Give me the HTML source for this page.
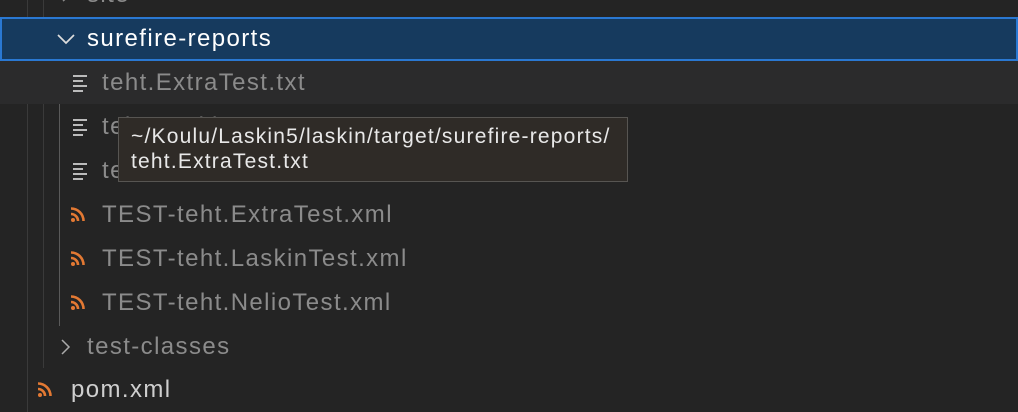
<!DOCTYPE html>
<html><head><style>
body{margin:0;width:1018px;height:412px;background:#242424;overflow:hidden;position:relative;font-family:"Liberation Sans",sans-serif;font-size:24px;letter-spacing:1.4px;}
.row{position:absolute;left:0;width:1018px;height:44px;line-height:44px;color:#8b8b8b;}
.g{position:absolute;width:1px;background:#3a3a3a;}
.t{position:absolute;top:0;white-space:nowrap;}
.tip{position:absolute;left:118px;top:117px;width:510px;height:65px;background:#2f2b27;border:1px solid #575552;color:#e8e8e8;font-size:21px;letter-spacing:1.2px;line-height:25px;padding:6px 0 0 12px;box-sizing:border-box;}
</style></head><body>
<div class="g" style="left:27px;top:0;height:412px"></div>
<div class="g" style="left:43px;top:0;height:368px"></div>
<div class="g" style="left:59px;top:61px;height:265px;background:#5a5a5a"></div>
<div class="row" style="top:-27px"><svg class="t" style="left:58px;top:14px" width="16" height="16"><path d="M5 2l7 6-7 6" stroke="#888" stroke-width="1.5" fill="none"/></svg><span class="t" style="left:87px">site</span></div>
<div class="row" style="top:17px;height:44px;background:#163a5e;box-sizing:border-box;border:2px solid #2a78d2;color:#fff"><svg class="t" style="left:54px;top:12px" width="20" height="16"><path d="M2 4l8 8 8-8" stroke="#ddd" stroke-width="1.7" fill="none"/></svg><span class="t" style="left:85px;top:-2px">surefire-reports</span></div>
<div class="row" style="top:61px;height:43px;background:#2b2b2c"></div>
<svg width="0" height="0" style="position:absolute"><defs>
<g id="txt"><rect x="0" y="0" width="14" height="2" fill="#bbb"/><rect x="0" y="5" width="10" height="2" fill="#bbb"/><rect x="0" y="10" width="14" height="2" fill="#bbb"/><rect x="0" y="15" width="10" height="2" fill="#bbb"/></g>
<g id="rss" fill="none" stroke="#e37933" stroke-width="2.6"><circle cx="3" cy="13" r="2" fill="#e37933" stroke="none"/><path d="M1 7a7 7 0 0 1 7 7"/><path d="M1 1.5a12.5 12.5 0 0 1 12.5 12.5"/></g>
</defs></svg>
<div class="row" style="top:61px"><svg class="t" style="left:73px;top:14px" width="16" height="18"><use href="#txt"/></svg><span class="t" style="left:102px">teht.ExtraTest.txt</span></div>
<div class="row" style="top:105px"><svg class="t" style="left:73px;top:14px" width="16" height="18"><use href="#txt"/></svg><span class="t" style="left:102px">teht.LaskinTest.txt</span></div>
<div class="row" style="top:149px"><svg class="t" style="left:73px;top:14px" width="16" height="18"><use href="#txt"/></svg><span class="t" style="left:102px">teht.NelioTest.txt</span></div>
<div class="row" style="top:193px"><svg class="t" style="left:70px;top:14px" width="16" height="16"><use href="#rss"/></svg><span class="t" style="left:102px">TEST-teht.ExtraTest.xml</span></div>
<div class="row" style="top:237px"><svg class="t" style="left:70px;top:14px" width="16" height="16"><use href="#rss"/></svg><span class="t" style="left:102px">TEST-teht.LaskinTest.xml</span></div>
<div class="row" style="top:281px"><svg class="t" style="left:70px;top:14px" width="16" height="16"><use href="#rss"/></svg><span class="t" style="left:102px">TEST-teht.NelioTest.xml</span></div>
<div class="row" style="top:325px"><svg class="t" style="left:58px;top:14px" width="16" height="16"><path d="M4 1l7 7-7 7" stroke="#aaa" stroke-width="1.5" fill="none"/></svg><span class="t" style="left:87px">test-classes</span></div>
<div class="row" style="top:368px;color:#cfcfcf"><svg class="t" style="left:37px;top:14px" width="16" height="16"><use href="#rss"/></svg><span class="t" style="left:71px">pom.xml</span></div>
<div class="tip">~/Koulu/Laskin5/laskin/target/surefire-reports/<br>teht.ExtraTest.txt</div>
</body></html>
